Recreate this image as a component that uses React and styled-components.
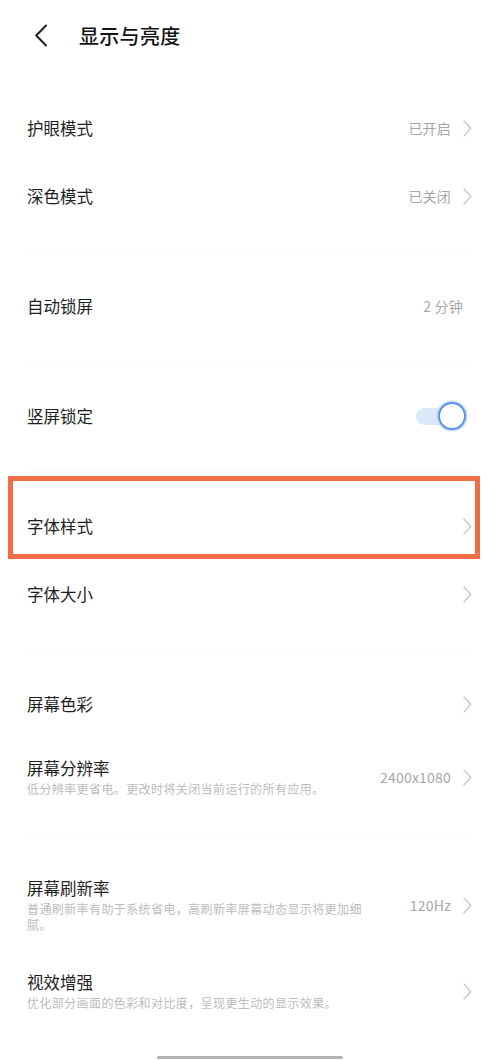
import React from "react"
import styled, { createGlobalStyle } from "styled-components"

const GlobalStyle = createGlobalStyle`
  html, body {
    margin: 0;
    padding: 0;
    background: #ffffff;
  }
  body {
    font-family: "Noto Sans CJK SC", "Noto Sans", sans-serif;
    -webkit-font-smoothing: antialiased;
  }
`

const sections = [
  [
    { title: "护眼模式", value: "已开启", arrow: true },
    { title: "深色模式", value: "已关闭", arrow: true },
  ],
  [{ title: "自动锁屏", value: "2 分钟" }],
  [{ title: "竖屏锁定", toggle: true }],
  [
    { title: "字体样式", arrow: true, marked: true },
    { title: "字体大小", arrow: true },
  ],
  [
    { title: "屏幕色彩", arrow: true },
    {
      title: "屏幕分辨率",
      desc: "低分辨率更省电。更改时将关闭当前运行的所有应用。",
      value: "2400x1080",
      arrow: true,
    },
  ],
  [
    {
      title: "屏幕刷新率",
      desc: "普通刷新率有助于系统省电，高刷新率屏幕动态显示将更加细腻。",
      value: "120Hz",
      arrow: true,
    },
    {
      title: "视效增强",
      desc: "优化部分画面的色彩和对比度，呈现更生动的显示效果。",
      arrow: true,
    },
  ],
]

const BackIcon = () => (
  <svg width="14" height="23" viewBox="0 0 14 23" fill="none">
    <path
      d="M12 1.5 L2.2 11.5 L12 21.5"
      stroke="#1f1f1f"
      strokeWidth="2"
      strokeLinecap="round"
      strokeLinejoin="round"
    />
  </svg>
)

const Chevron = () => (
  <svg width="9" height="17" viewBox="0 0 9 17" fill="none">
    <path
      d="M1 1 L7.8 8.5 L1 16"
      stroke="#c9c9c9"
      strokeWidth="1.4"
      strokeLinecap="round"
      strokeLinejoin="round"
    />
  </svg>
)

const App = () => {
  return (
    <Page>
      <GlobalStyle />
      <Header>
        <BackButton>
          <BackIcon />
        </BackButton>
        <Title>显示与亮度</Title>
      </Header>

      <List>
        {sections.map((group, gi) => (
          <React.Fragment key={gi}>
            {gi > 0 && (
              <Gap>
                <Divider />
              </Gap>
            )}
            {group.map((item) => (
              <Row key={item.title} tall={!!item.desc}>
                {item.marked && <Marker />}
                <Texts>
                  <RowTitle>{item.title}</RowTitle>
                  {item.desc && <Desc>{item.desc}</Desc>}
                </Texts>
                <Trail arrow={item.arrow}>
                  {item.value && <Value>{item.value}</Value>}
                  {item.toggle && (
                    <Switch>
                      <Track />
                      <Knob />
                    </Switch>
                  )}
                  {item.arrow && <Chevron />}
                </Trail>
              </Row>
            ))}
          </React.Fragment>
        ))}
      </List>

      <HomeBar />
    </Page>
  )
}

export default App

const Page = styled.div`
  width: 500px;
  height: 1060px;
  overflow: hidden;
  background: #ffffff;
  display: flex;
  flex-direction: column;
`

const Header = styled.div`
  height: 70px;
  display: flex;
  align-items: center;
  padding-left: 34px;
`

const BackButton = styled.div`
  width: 14px;
  height: 23px;
  display: flex;
  margin-right: 31px;
`

const Title = styled.h1`
  margin: 0;
  font-size: 20px;
  font-weight: 500;
  color: #141414;
  letter-spacing: 0.3px;
`

const List = styled.div`
  margin-top: 24px;
  display: flex;
  flex-direction: column;
`

const Gap = styled.div`
  height: 42px;
  display: flex;
  align-items: center;
  padding: 0 28px 0 30px;
`

const Divider = styled.div`
  flex: 1;
  height: 1px;
  background: #f9f9f9;
`

const Row = styled.div`
  position: relative;
  display: flex;
  align-items: center;
  justify-content: space-between;
  min-height: ${({ tall }) => (tall ? "auto" : "68px")};
  padding: ${({ tall }) => (tall ? "19px 28px 19px 27px" : "0 28px 0 27px")};
  box-sizing: border-box;
`

const Marker = styled.div`
  position: absolute;
  left: 8px;
  top: -16px;
  width: 472px;
  height: 83px;
  box-sizing: border-box;
  border: 5px solid #f26d45;
  pointer-events: none;
`

const Texts = styled.div`
  display: flex;
  flex-direction: column;
  max-width: 340px;
`

const RowTitle = styled.div`
  font-size: 16.5px;
  line-height: 22px;
  color: #1e1e1e;
`

const Desc = styled.div`
  margin-top: 2px;
  font-size: 12px;
  letter-spacing: 0.4px;
  line-height: 16px;
  color: #bcbcbc;
`

const Trail = styled.div`
  display: flex;
  align-items: center;
  gap: 12px;
  margin-right: ${({ arrow }) => (arrow ? "0" : "9px")};
`

const Value = styled.span`
  font-size: 14px;
  color: #a6a6a6;
  letter-spacing: 0.2px;
`

const Switch = styled.div`
  position: relative;
  width: 54px;
  height: 32px;
  display: flex;
  align-items: center;
  margin-right: -5px;
`

const Track = styled.div`
  width: 36px;
  height: 17px;
  border-radius: 9px;
  background: #dbe8f8;
  margin-left: 2px;
`

const Knob = styled.div`
  position: absolute;
  right: 2px;
  top: 2px;
  width: 28px;
  height: 28px;
  box-sizing: border-box;
  border-radius: 50%;
  background: #ffffff;
  border: 2.5px solid #5c95e2;
  box-shadow: 0 0 0 1.5px #c6dbf6;
`

const HomeBar = styled.div`
  align-self: center;
  margin-top: auto;
  margin-bottom: 1px;
  width: 186px;
  height: 3px;
  border-radius: 2px;
  background: #b3b3b3;
`
